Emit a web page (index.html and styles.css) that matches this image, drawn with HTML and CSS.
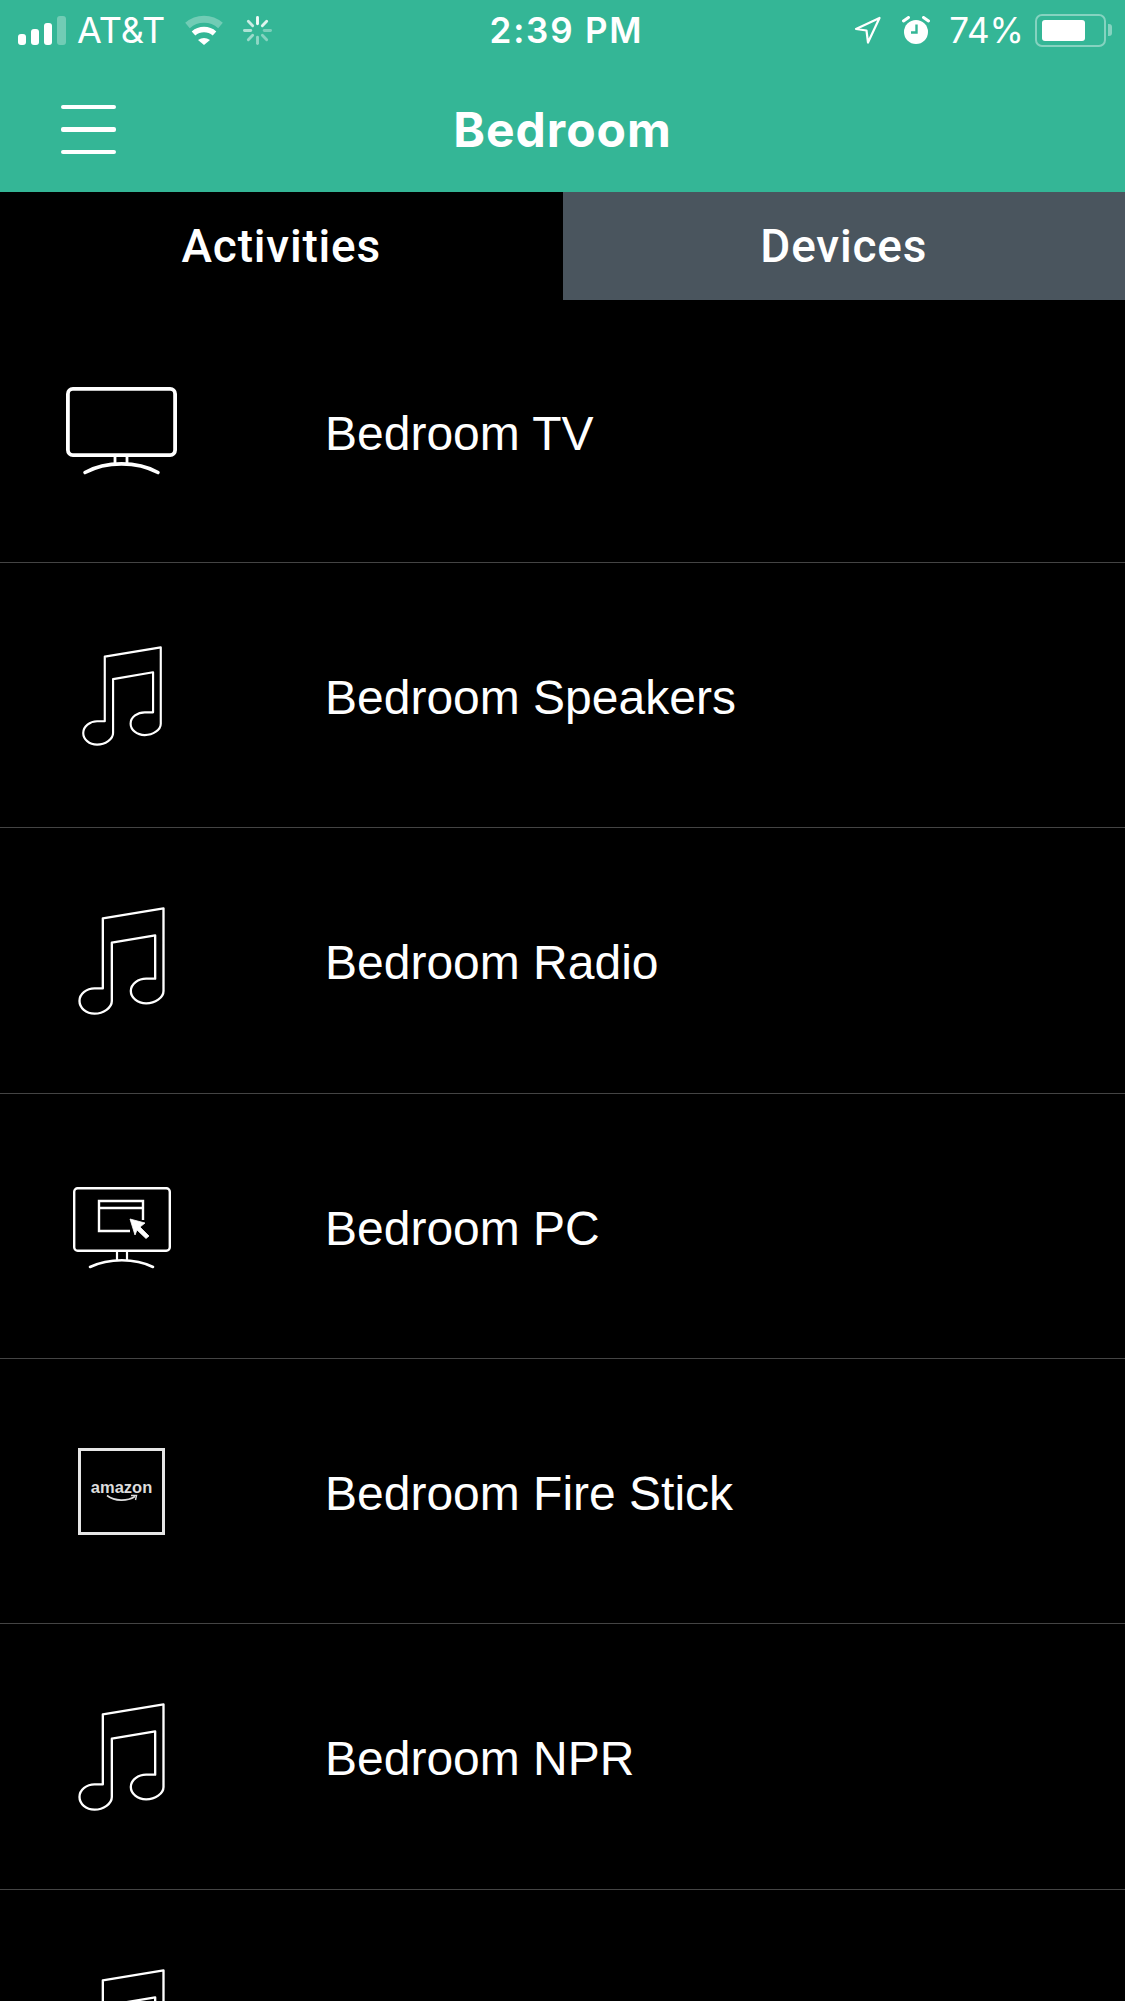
FILE: index.html
```html
<!DOCTYPE html>
<html lang="en">
<head>
  <title>Bedroom</title>
  <link rel="stylesheet" href="styles.css">
</head>
<body>

  <svg class="defs">
    <symbol id="note" viewBox="114 83 260 324">
      <path d="M188 117 L370 87 V335 C370 355 345 372 318 372 C292 372 272 355 272 335 C272 313 295 298 318 298 H345 V168 L215 190 V365 C215 385 190 403 163 403 C137 403 118 385 118 365 C118 343 140 327 163 327 H188 Z" fill="none" stroke="#fff" stroke-width="7" stroke-linejoin="round"/>
    </symbol>
  </svg>

  <div class="header">
    <div class="statusbar">
      <div class="status-left">
        <div class="signal">
          <span class="bar bar1"></span>
          <span class="bar bar2"></span>
          <span class="bar bar3"></span>
          <span class="bar bar4"></span>
        </div>
        <span class="carrier">AT&amp;T</span>
        <svg class="wifi" viewBox="0 0 40 30">
          <path d="M3.5 10.5 A25 25 0 0 1 36.5 10.5" fill="none" stroke="#fff" stroke-opacity=".3" stroke-width="7"/>
          <path d="M9.5 18.5 A16 16 0 0 1 30.5 18.5" fill="none" stroke="#fff" stroke-width="5.5"/>
          <path d="M14 25 Q20 21 26 25 L20 30 Z" fill="#fff"/>
        </svg>
        <svg class="spinner" viewBox="0 0 30 30" stroke="#fff" stroke-width="3" stroke-linecap="round">
          <line x1="15" y1="1.5" x2="15" y2="8" stroke-opacity=".95"/>
          <line x1="24.5" y1="5.5" x2="20" y2="10" stroke-opacity=".85"/>
          <line x1="28.5" y1="15" x2="22" y2="15" stroke-opacity=".35"/>
          <line x1="24.5" y1="24.5" x2="20" y2="20" stroke-opacity=".4"/>
          <line x1="15" y1="28.5" x2="15" y2="22" stroke-opacity=".45"/>
          <line x1="5.5" y1="24.5" x2="10" y2="20" stroke-opacity=".5"/>
          <line x1="1.5" y1="15" x2="8" y2="15" stroke-opacity=".6"/>
          <line x1="5.5" y1="5.5" x2="10" y2="10" stroke-opacity=".75"/>
        </svg>
      </div>
      <div class="time">2:39 PM</div>
      <div class="status-right">
        <svg class="location" viewBox="0 0 27 28">
          <path d="M2 13 L25.5 2 L14 26.5 L12.5 14.5 Z" fill="none" stroke="#fff" stroke-width="2.2" stroke-linejoin="round"/>
        </svg>
        <svg class="alarm" viewBox="0 0 27 29">
          <circle cx="13.5" cy="16" r="12" fill="#fff"/>
          <path d="M1 5 L6 1.5 M26 5 L21 1.5" stroke="#fff" stroke-width="3" stroke-linecap="round"/>
          <path d="M14 8.5 V16.5 H8.5" fill="none" stroke="#34b696" stroke-width="2.4"/>
        </svg>
        <span class="percent">74%</span>
        <div class="battery">
          <div class="battery-level"></div>
        </div>
        <div class="battery-nub"></div>
      </div>
    </div>
    <div class="navbar">
      <div class="hamburger">
        <span></span>
        <span></span>
        <span></span>
      </div>
      <h1 class="title">Bedroom</h1>
    </div>
  </div>

  <div class="tabs">
    <div class="tab tab-active">Activities</div>
    <div class="tab">Devices</div>
  </div>

  <div class="list">
    <div class="row row-first">
      <div class="row-icon">
        <svg class="icon-tv" viewBox="0 0 111 88" fill="none" stroke="#fff">
          <rect x="1.9" y="1.9" width="107.2" height="66.2" rx="5" stroke-width="3.8"/>
          <path d="M49 68 V77 M61 68 V77" stroke-width="2.8"/>
          <path d="M19 85.5 C40 74 71 74 92 85.5" stroke-width="3.6" stroke-linecap="round"/>
        </svg>
      </div>
      <span class="row-label">Bedroom TV</span>
    </div>
    <div class="row">
      <div class="row-icon"><svg class="icon-note-small"><use href="#note"/></svg></div>
      <span class="row-label">Bedroom Speakers</span>
    </div>
    <div class="row">
      <div class="row-icon"><svg class="icon-note"><use href="#note"/></svg></div>
      <span class="row-label">Bedroom Radio</span>
    </div>
    <div class="row">
      <div class="row-icon">
        <svg class="icon-pc" viewBox="0 0 98 83" fill="none" stroke="#fff">
          <rect x="1.2" y="1.2" width="95.6" height="62.6" rx="3.5" stroke-width="2.4"/>
          <path d="M70 33 V14 H26 V44 H57 M26 21 H70" stroke-width="2.4"/>
          <path d="M57 32 L72 36 L67 40 L76 49 L73 51.5 L64 43 L62 48 Z" fill="#fff" stroke="#fff" stroke-width=".8"/>
          <path d="M44 64 V73 M54 64 V73" stroke-width="2.2"/>
          <path d="M17 80 C36 71 62 71 80 80" stroke-width="2.6" stroke-linecap="round"/>
        </svg>
      </div>
      <span class="row-label">Bedroom PC</span>
    </div>
    <div class="row">
      <div class="row-icon">
        <div class="amazon-box">
          <span class="amazon-word">amazon</span>
          <svg class="amazon-smile" viewBox="0 0 32 9" fill="none" stroke="#ddd">
            <path d="M1 1.5 C9 7.5 21 7.5 29 2.5" stroke-width="1.6"/>
            <path d="M25 1.5 L30.5 1.5 L29.5 6" stroke-width="1.4"/>
          </svg>
        </div>
      </div>
      <span class="row-label">Bedroom Fire Stick</span>
    </div>
    <div class="row">
      <div class="row-icon"><svg class="icon-note"><use href="#note"/></svg></div>
      <span class="row-label">Bedroom NPR</span>
    </div>
    <div class="row">
      <div class="row-icon"><svg class="icon-note"><use href="#note"/></svg></div>
    </div>
  </div>

</body>
</html>
```
FILE: styles.css
```css
html, body {
  margin: 0;
  height: 2001px;
  overflow: hidden;
}

body {
  background-color: #000;
  color: #fff;
  font-family: "Liberation Sans", sans-serif;
}

.defs {
  display: none;
}

.header {
  height: 192px;
  background-color: #34b696;
}

.statusbar {
  display: grid;
  grid-template-columns: 1fr auto 1fr;
  align-items: center;
  height: 60px;
  font-family: Inter, sans-serif;
}

.status-left {
  display: flex;
  align-items: center;
  padding-left: 18px;
}

.signal {
  display: flex;
  align-items: flex-end;
  gap: 5px;
  height: 29px;
}

.bar {
  width: 8px;
  border-radius: 3px;
  background-color: #fff;
}

.bar1 { height: 11px; }
.bar2 { height: 16px; }
.bar3 { height: 22px; }
.bar4 { height: 29px; width: 9px; opacity: .3; }

.carrier {
  margin-left: 11px;
  font-size: 36px;
  font-weight: 400;
}

.wifi {
  width: 42px;
  height: 30px;
  margin-left: 18px;
}

.spinner {
  width: 29px;
  height: 29px;
  margin-left: 18px;
}

.time {
  margin-left: 8px;
  font-size: 35px;
  font-weight: 600;
  letter-spacing: 1.8px;
}

.status-right {
  display: flex;
  align-items: center;
  justify-content: flex-end;
  padding-right: 13px;
}

.location {
  width: 27px;
  height: 28px;
}

.alarm {
  width: 28px;
  height: 29px;
  margin-left: 21px;
}

.percent {
  margin-left: 19px;
  font-size: 35px;
}

.battery {
  width: 71px;
  height: 33px;
  margin-left: 11px;
  padding: 4px 5px;
  box-sizing: border-box;
  border: 2px solid rgba(255, 255, 255, .4);
  border-radius: 7px;
}

.battery-level {
  width: 43px;
  height: 100%;
  border-radius: 3px;
  background-color: #fff;
}

.battery-nub {
  width: 4px;
  height: 12px;
  margin-left: 2px;
  border-radius: 0 3px 3px 0;
  background-color: rgba(255, 255, 255, .4);
}

.navbar {
  display: grid;
  grid-template-columns: 1fr auto 1fr;
  align-items: center;
  height: 132px;
  padding-top: 7px;
  box-sizing: border-box;
  font-family: Inter, sans-serif;
}

.hamburger {
  display: flex;
  flex-direction: column;
  gap: 18px;
  width: 55px;
  margin-left: 61px;
}

.hamburger span {
  height: 4.5px;
  border-radius: 2px;
  background-color: #fff;
}

.title {
  margin: 0;
  font-size: 48px;
  font-weight: 700;
  letter-spacing: 1px;
}

.tabs {
  display: flex;
  height: 108px;
  font-family: Roboto, sans-serif;
}

.tab {
  display: flex;
  align-items: center;
  justify-content: center;
  flex: 1;
  background-color: #4a555e;
  font-size: 46px;
  font-weight: 500;
  letter-spacing: .8px;
}

.tab-active {
  background-color: #000;
}

.list {
  height: 1701px;
  overflow: hidden;
}

.row {
  display: flex;
  align-items: center;
  height: 265.33px;
  box-sizing: border-box;
  border-bottom: 1px solid #444;
}

.row-first {
  height: 263px;
}

.row-icon {
  display: flex;
  align-items: center;
  justify-content: center;
  width: 243px;
}

.row-label {
  padding-left: 82px;
  padding-top: 5px;
  font-size: 48px;
}

.icon-tv {
  width: 111px;
  height: 88px;
}

.icon-note {
  width: 87px;
  height: 108px;
  margin-top: 2px;
}

.icon-note-small {
  width: 80px;
  height: 100px;
  margin-top: 2px;
}

.icon-pc {
  width: 98px;
  height: 83px;
  margin-top: 5px;
}

.amazon-box {
  display: flex;
  flex-direction: column;
  align-items: center;
  justify-content: center;
  width: 87px;
  height: 87px;
  box-sizing: border-box;
  border: 3px solid #e6e6e6;
}

.amazon-word {
  font-size: 16.5px;
  font-weight: 700;
  line-height: 15px;
  color: #ddd;
}

.amazon-smile {
  width: 32px;
  height: 9px;
  margin-top: -1px;
}
```
